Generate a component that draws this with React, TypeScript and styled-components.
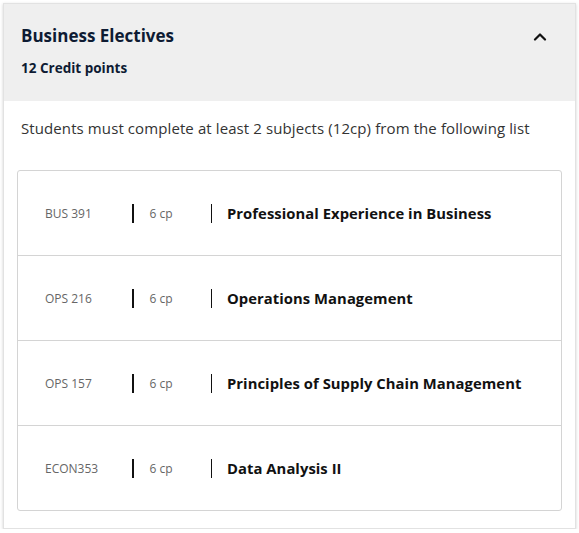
import React from 'react';
import styled, { createGlobalStyle } from 'styled-components';

const GlobalStyle = createGlobalStyle`
    body {
        margin: 0;
        background: #fff;
        font-family: 'Open Sans', 'Liberation Sans', sans-serif;
    }
`;

const Card = styled.section`
    margin: 3px 3px 0 3px;
    width: 573px;
    border: 1px solid #e2e2e2;
    box-shadow: 0 1px 3px rgba(0, 0, 0, 0.18);
    background: #fff;
    box-sizing: border-box;
`;

const Header = styled.div`
    background: #efefef;
    height: 97px;
    box-sizing: border-box;
    padding: 21px 28px 0 17px;
    display: flex;
    justify-content: space-between;
    align-items: flex-start;
`;

const HeaderText = styled.div`
    display: flex;
    flex-direction: column;
    gap: 12px;
`;

const Title = styled.h2`
    margin: 0;
    font-size: 17px;
    line-height: 22px;
    font-weight: 700;
    color: #0e1b33;
`;

const Credits = styled.div`
    font-size: 13.5px;
    line-height: 18px;
    font-weight: 700;
    color: #0e1b33;
`;

const Toggle = styled.button`
    border: 0;
    background: none;
    padding: 0;
    margin-top: 7px;
    display: flex;
    cursor: pointer;
`;

const Body = styled.div`
    padding: 16px 13px 17px 13px;
`;

const Intro = styled.p`
    margin: 0 0 31px 4px;
    font-size: 15px;
    line-height: 22px;
    letter-spacing: 0.1px;
    color: #333;
`;

const List = styled.ul`
    list-style: none;
    margin: 0;
    padding: 0;
    border: 1px solid #d4d4d4;
    border-radius: 3px;
`;

const Row = styled.li`
    height: 84px;
    display: flex;
    align-items: center;
    padding-left: 27px;
    & + & {
        border-top: 1px solid #d4d4d4;
    }
`;

const Code = styled.span`
    width: 87px;
    font-size: 12px;
    color: #666;
`;

const Divider = styled.span`
    width: 1.5px;
    height: 19px;
    background: #111;
`;

const Points = styled.span`
    width: 61px;
    padding-left: 16px;
    font-size: 12px;
    color: #666;
`;

const Name = styled.span`
    padding-left: 15px;
    font-size: 14.8px;
    letter-spacing: 0.05px;
    font-weight: 700;
    color: #111;
`;

const subjects = [
    { code: 'BUS 391', cp: 6, name: 'Professional Experience in Business' },
    { code: 'OPS 216', cp: 6, name: 'Operations Management' },
    { code: 'OPS 157', cp: 6, name: 'Principles of Supply Chain Management' },
    { code: 'ECON353', cp: 6, name: 'Data Analysis II' },
];

const ChevronUp = () => (
    <svg width="14" height="9" viewBox="0 0 14 9" fill="none">
        <path d="M2 7.5 L7 2.5 L12 7.5" stroke="#111" strokeWidth="2.2" strokeLinecap="round" strokeLinejoin="round" />
    </svg>
);

export default function App() {
    return (
        <>
            <GlobalStyle />
            <Card>
                <Header>
                    <HeaderText>
                        <Title>Business Electives</Title>
                        <Credits>12 Credit points</Credits>
                    </HeaderText>
                    <Toggle aria-label="Collapse">
                        <ChevronUp />
                    </Toggle>
                </Header>
                <Body>
                    <Intro>Students must complete at least 2 subjects (12cp) from the following list</Intro>
                    <List>
                        {subjects.map((s) => (
                            <Row key={s.code}>
                                <Code>{s.code}</Code>
                                <Divider />
                                <Points>{s.cp} cp</Points>
                                <Divider />
                                <Name>{s.name}</Name>
                            </Row>
                        ))}
                    </List>
                </Body>
            </Card>
        </>
    );
}
